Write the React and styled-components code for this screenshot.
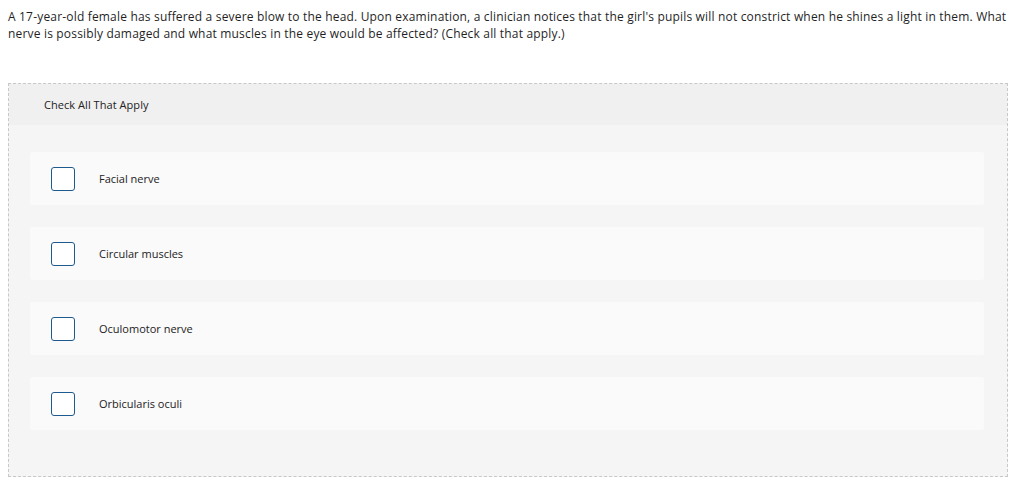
import React from 'react';
import styled, { createGlobalStyle } from 'styled-components';

const Global = createGlobalStyle`
  body {
    margin: 0;
    background: #fff;
    font-family: 'Open Sans', 'Lato', sans-serif;
    color: #222;
  }
`;

const Page = styled.div`
  padding: 8px 8px 0 8px;
`;

const Question = styled.p`
  margin: 0;
  font-size: 12px;
  letter-spacing: 0.18px;
  line-height: 17px;
  color: #1f1f1f;
`;

const Panel = styled.div`
  margin-top: 41px;
  border: 1px dashed #c8c8c8;
  background: #f5f5f5;
  width: 998px;
`;

const Header = styled.div`
  background: #f0f0f0;
  height: 41px;
  display: flex;
  align-items: center;
  padding-left: 35px;
  font-size: 11px;
  letter-spacing: 0.05px;
  color: #222;
`;

const Options = styled.div`
  display: flex;
  flex-direction: column;
  gap: 22px;
  padding: 27px 23px 46px 21px;
`;

const Row = styled.label`
  display: flex;
  align-items: center;
  height: 53px;
  background: #fafafa;
  border-radius: 2px;
  padding-left: 21px;
  font-size: 11px;
  color: #222;
  cursor: pointer;
`;

const Box = styled.span`
  box-sizing: border-box;
  width: 24px;
  height: 24px;
  border: 1.5px solid #1d5b8f;
  border-radius: 3px;
  background: #fff;
  margin-right: 24px;
  flex-shrink: 0;
`;

const options = ['Facial nerve', 'Circular muscles', 'Oculomotor nerve', 'Orbicularis oculi'];

export default function App() {
  return (
    <Page>
      <Global />
      <Question>
        A 17-year-old female has suffered a severe blow to the head. Upon examination, a clinician notices that the girl's pupils will not constrict when he shines a light in them. What nerve is possibly damaged and what muscles in the eye would be affected? (Check all that apply.)
      </Question>
      <Panel>
        <Header>Check All That Apply</Header>
        <Options>
          {options.map((o) => (
            <Row key={o}>
              <Box />
              {o}
            </Row>
          ))}
        </Options>
      </Panel>
    </Page>
  );
}
